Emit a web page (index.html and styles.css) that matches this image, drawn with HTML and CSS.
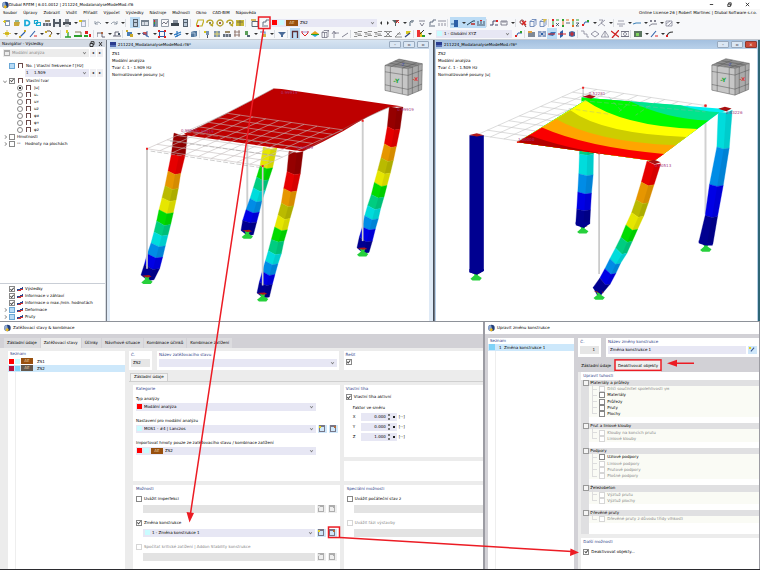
FILE: index.html
```html
<!DOCTYPE html>
<html lang="cs">
<head>
<meta charset="utf-8">
<title>Dlubal RFEM</title>
<link rel="stylesheet" href="styles.css">
</head>
<body>
<header class="app-head">
  <div class="title-bar">
    <svg class="logo" viewBox="0 0 8 8"><circle cx="4.5" cy="4" r="3.2" fill="#23407c"/><path d="M1 2l3-1 1 4-3 2z" fill="#8fa9cf"/><circle cx="4.2" cy="5.8" r="1.5" fill="#e8b820"/></svg>
    <span class="grow">Dlubal RFEM | 6.01.0012 | 211224_ModalanalyseModeMod.rf6</span>
    <button class="win" aria-label="Minimalizovat"><svg viewBox="0 0 6 6"><path d="M1 3h4" /></svg></button>
    <button class="win" aria-label="Obnovit"><svg viewBox="0 0 6 6"><path d="M1 2.5h3v3H1zM2 2.5V1h3v3H4"/></svg></button>
    <button class="win" aria-label="Zavřít"><svg viewBox="0 0 6 6"><path d="M1 1l4 4M5 1L1 5"/></svg></button>
  </div>
  <nav class="menu">
    <a href="#">Soubor</a><a href="#">Úpravy</a><a href="#">Zobrazit</a><a href="#">Vložit</a><a href="#">Přiřadit</a><a href="#">Výpočet</a><a href="#">Výsledky</a><a href="#">Nástroje</a><a href="#">Možnosti</a><a href="#">Okno</a><a href="#">CAD-BIM</a><a href="#">Nápověda</a>
    <span class="licence">Online License 26 | Robert Martinec | Dlubal Software s.r.o.</span>
  </nav>
  <div class="toolbar">
    <div class="tools wide" data-icons="newdoc folder dcyan copies blocks save print v docstar | undo v redo v | panel* table legend chart printer panel | para swirl gear swirl sheet | window loadcase"></div>
    <div class="combo case-combo"><i class="sw red"></i><i class="sw cyan"></i><i class="ae">AE</i><select aria-label="Zatěžovací stav"><option>ZS2</option></select><i class="chev"></i></div>
    <div class="tools" data-icons="prev next filter v hook dots loadcase bars | wave* v* load* beam* | arrowx ruler v | findx cube cubey | axx axy axz axr v sketch v | strike v line v xx v hatch v"></div>
  </div>
  <div class="toolbar">
    <div class="tools" data-icons="star v pen penx v hookr v | node greens redgreen | nodes v beams | shape v rednode v square v blue v cubeb | pin gridy blocks gridr greenx v pinb v | funnel | frame* redv rainbow box3 axis slash | layers layers layers layersx wedge wandy | spectrum v"></div>
    <div class="combo axis-combo"><i class="sw cyan"></i><select aria-label="Souřadný systém"><option>1 - Globální XYZ</option></select><i class="chev"></i></div>
    <div class="tools" data-icons="axr | boxo target plane* planer planed | steps diamond tri redx camera | greenbox v penx v curve"></div>
  </div>
</header>

<main class="workspace">
  <aside class="navigator">
    <h2>Navigátor - Výsledky <svg class="dock" viewBox="0 0 14 6"><path d="M1 2.5h3v3H1zM2 2V.7h3v3H4M10 1l3 4M13 1l-3 4"/></svg></h2>
    <div class="nav-pick"><div class="combo off"><i class="sheet"></i><select aria-label="Typ analýzy" disabled><option>Modální analýza</option></select><i class="chev"></i></div><button aria-label="Předchozí">◂</button><button aria-label="Další">▸</button></div>
    <div class="tree">
      <label class="r"><i class="tw"></i><input type="checkbox" class="part"><i class="fr"></i>No. | Vlastní frekvence f [Hz]</label>
      <div class="nav-pick freq"><div class="combo"><span>1</span><select aria-label="Vlastní frekvence"><option>1.509</option></select><i class="chev"></i></div><button aria-label="Předchozí tvar">◂</button><button aria-label="Další tvar">▸</button></div>
      <label class="r"><i class="tw open"></i><input type="checkbox" checked><i class="fr"></i>Vlastní tvar</label>
      <label class="r sub"><input type="radio" name="u" checked><i class="fr"></i>|u|</label>
      <label class="r sub"><input type="radio" name="u"><i class="fr"></i>uₓ</label>
      <label class="r sub"><input type="radio" name="u"><i class="fr"></i>uʏ</label>
      <label class="r sub"><input type="radio" name="u"><i class="fr"></i>uᴢ</label>
      <label class="r sub"><input type="radio" name="u"><i class="fr"></i>φx</label>
      <label class="r sub"><input type="radio" name="u"><i class="fr"></i>φʏ</label>
      <label class="r sub"><input type="radio" name="u"><i class="fr"></i>φᴢ</label>
      <label class="r"><i class="tw shut"></i><input type="checkbox">Hmotnosti</label>
      <label class="r"><i class="tw shut"></i><input type="checkbox"><i class="xx">ˣˣ</i>Hodnoty na plochách</label>
    </div>
    <div class="tree foot">
      <label class="r"><i class="tw"></i><input type="checkbox" checked><i class="bm"></i>Výsledky</label>
      <label class="r"><i class="tw"></i><input type="checkbox" checked><i class="bm"></i>Informace v záhlaví</label>
      <label class="r"><i class="tw"></i><input type="checkbox" checked><i class="bm"></i>Informace o max./min. hodnotách</label>
      <label class="r"><i class="tw shut"></i><input type="checkbox" class="part"><i class="bm"></i>Deformace</label>
      <label class="r"><i class="tw shut"></i><input type="checkbox" class="part"><i class="bm"></i>Pruty</label>
    </div>
  </aside>

  <section class="mdi">
    <div class="mdi-bar"><i class="flag"></i><span class="grow">211224_ModalanalyseModeMod.rf6*</span><button aria-label="Minimalizovat">–</button><button aria-label="Maximalizovat">▫</button><button aria-label="Zavřít">▫</button></div>
    <div class="view">
      <svg id="sceneA" viewBox="110 49 319 271" role="img" aria-label="Tvar kmitu ZS1"></svg>
      <p>ZS1<br>Modální analýza<br>Tvar č. 1 - 1.909 Hz<br>Normalizované posuny |u|</p>
    </div>
  </section>
  <section class="mdi active">
    <div class="mdi-bar"><i class="flag"></i><span class="grow">211224_ModalanalyseModeMod.rf6*</span><button aria-label="Minimalizovat">–</button><button aria-label="Maximalizovat">▫</button><button class="close" aria-label="Zavřít">×</button></div>
    <div class="view">
      <svg id="sceneB" viewBox="436 49 320 271" role="img" aria-label="Tvar kmitu ZS2"></svg>
      <p>ZS2<br>Modální analýza<br>Tvar č. 1 - 1.509 Hz<br>Normalizované posuny |u|</p>
    </div>
  </section>
</main>

<div class="dialogs">
  <section class="dlg cases">
    <h2><svg class="logo" viewBox="0 0 8 8"><circle cx="4.5" cy="4" r="3.2" fill="#23407c"/><path d="M1 2l3-1 1 4-3 2z" fill="#8fa9cf"/><circle cx="4.2" cy="5.8" r="1.5" fill="#e8b820"/></svg>Zatěžovací stavy &amp; kombinace</h2>
    <div class="tabs"><button>Základní údaje</button><button class="on">Zatěžovací stavy</button><button>Účinky</button><button>Návrhové situace</button><button>Kombinace účinků</button><button>Kombinace zatížení</button></div>
    <div class="cases-body">
      <div class="panel list">
        <h3>Seznam</h3>
        <div class="li"><i class="sw red"></i><i class="sw cyan"></i><i class="ae">AE</i><span>ZS1</span></div>
        <div class="li sel"><i class="sw wine"></i><i class="sw sky"></i><i class="ae dim">AE</i><span>ZS2</span></div>
        <div class="rest"></div>
      </div>
      <div class="detail">
        <div class="ident">
          <label class="panel no"><span class="cap">Č.</span><input class="field ro" value="ZS2" readonly></label>
          <div class="panel name"><label class="cap" for="nm">Název zatěžovacího stavu</label><div class="combo"><select id="nm"><option></option></select><i class="chev"></i></div></div>
          <div class="panel solve"><label class="cap" for="sv">Řešit</label><input id="sv" type="checkbox" checked></div>
        </div>
        <div class="inner-tabs"><button>Základní údaje</button></div>
        <div class="cols">
          <div class="panel cat">
            <h3>Kategorie</h3>
            <label for="f1">Typ analýzy</label>
            <div class="line"><div class="combo"><i class="sw red"></i><select id="f1"><option>Modální analýza</option></select><i class="chev"></i></div></div>
            <label for="f2">Nastavení pro modální analýzu</label>
            <div class="line"><div class="combo"><i class="sw cyan"></i><select id="f2"><option>MOS1 - #4 | Lanczos</option></select><i class="chev"></i></div><button class="act new" aria-label="Nový"></button><button class="act edit" aria-label="Upravit"></button></div>
            <label for="f3">Importovat hmoty pouze ze zatěžovacího stavu / kombinace zatížení</label>
            <div class="line"><div class="combo"><i class="sw red"></i><i class="sw cyan"></i><i class="ae">AE</i><select id="f3"><option>ZS2</option></select><i class="chev"></i></div></div>
          </div>
          <div class="right-top">
            <div class="panel weight">
              <h3>Vlastní tíha</h3>
              <label class="ck"><input type="checkbox" checked>Vlastní tíha aktivní</label>
              <p>Faktor ve směru</p>
              <label class="ax"><span>X</span><input value="0.000"><i class="spin"></i><em>[--]</em></label>
              <label class="ax"><span>Y</span><input value="0.000"><i class="spin"></i><em>[--]</em></label>
              <label class="ax"><span>Z</span><input value="1.000"><i class="spin"></i><em>[--]</em></label>
            </div>
            <div class="panel blank"></div>
          </div>
          <div class="panel opts">
            <h3>Možnosti</h3>
            <label class="ck"><input type="checkbox">Uvážit imperfekci</label>
            <div class="line in"><div class="combo gone"></div><button class="act new gray" aria-label="Nový" disabled></button><button class="act edit gray" aria-label="Upravit" disabled></button></div>
            <label class="ck"><input type="checkbox" checked>Změna konstrukce</label>
            <div class="line in"><div class="combo"><i class="sw cyan"></i><select aria-label="Změna konstrukce"><option>1 - Změna konstrukce 1</option></select><i class="chev"></i></div><button class="act new" aria-label="Nová změna"></button><button class="act edit" aria-label="Upravit změnu"></button></div>
            <label class="ck dis"><input type="checkbox" disabled>Spočítat kritické zatížení | Addon Stability konstrukce</label>
            <div class="line in"><div class="combo gone"></div><button class="act new gray" aria-label="Nový" disabled></button><button class="act edit gray" aria-label="Upravit" disabled></button></div>
          </div>
          <div class="panel opts special">
            <h3>Speciální možnosti</h3>
            <label class="ck"><input type="checkbox">Uvážit počáteční stav z</label>
            <div class="line in"><div class="combo gone"></div></div>
            <label class="ck dis"><input type="checkbox" disabled>Uvážit fázi výstavby</label>
            <div class="line in"><div class="combo gone"></div></div>
          </div>
        </div>
      </div>
    </div>
  </section>

  <section class="dlg mod">
    <h2><svg class="logo" viewBox="0 0 8 8"><circle cx="4.5" cy="4" r="3.2" fill="#23407c"/><path d="M1 2l3-1 1 4-3 2z" fill="#8fa9cf"/><circle cx="4.2" cy="5.8" r="1.5" fill="#e8b820"/></svg>Upravit změnu konstrukce</h2>
    <div class="mod-body">
      <div class="panel list">
        <h3>Seznam</h3>
        <div class="li sel"><i class="sw sky"></i><span>1&nbsp; Změna konstrukce 1</span></div>
        <div class="rest"></div>
      </div>
      <div class="detail">
        <div class="ident">
          <label class="panel no"><span class="cap">Č.</span><input class="field ro num" value="1" readonly></label>
          <div class="panel name"><label class="cap" for="mn">Název změny konstrukce</label><div class="line"><input id="mn" class="field" value="Změna konstrukce 1"><button class="act pen" aria-label="Upravit název"></button></div></div>
        </div>
        <div class="mod-tabs"><button>Základní údaje</button><button class="on">Deaktivovat objekty</button></div>
        <div class="stiff">
          <h3>Upravit tuhosti</h3>
          <div class="groups">
            <div class="g">Materiály a průřezy</div>
            <label class="n dis"><input type="checkbox" disabled>Dílčí součinitel spolehlivosti γᴍ</label>
            <label class="n"><input type="checkbox">Materiály</label>
            <label class="n"><input type="checkbox">Průřezy</label>
            <label class="n"><input type="checkbox">Pruty</label>
            <label class="n"><input type="checkbox">Plochy</label>
            <div class="gap"></div>
            <div class="g">Prut a liniové klouby</div>
            <label class="n dis"><input type="checkbox" disabled>Klouby na koncích prutu</label>
            <label class="n dis"><input type="checkbox" disabled>Liniové klouby</label>
            <div class="gap"></div>
            <div class="g">Podpory</div>
            <label class="n"><input type="checkbox">Uzlové podpory</label>
            <label class="n dis"><input type="checkbox" disabled>Liniové podpory</label>
            <label class="n dis"><input type="checkbox" disabled>Prutové podpory</label>
            <label class="n dis"><input type="checkbox" disabled>Plošné podpory</label>
            <div class="gap"></div>
            <div class="g">Železobeton</div>
            <label class="n dis"><input type="checkbox" disabled>Výztuž prutu</label>
            <label class="n dis"><input type="checkbox" disabled>Výztuž plochy</label>
            <div class="gap"></div>
            <div class="g">Dřevěné pruty</div>
            <label class="n dis"><input type="checkbox" disabled>Dřevěné pruty z důvodu třídy vlhkosti</label>
            <div class="gap"></div>
          </div>
          <div class="panel more"><h3>Další možnosti</h3><label class="ck"><input type="checkbox" checked>Deaktivovat objekty...</label></div>
        </div>
      </div>
    </div>
  </section>
</div>

<svg class="callouts" viewBox="0 0 760 570" preserveAspectRatio="none" aria-hidden="true">
  <g fill="none" stroke="#ec1c24" stroke-width="1.5"><rect x="258.5" y="17" width="11.5" height="11.5"/><path d="M263.5 29L190.500 513M340 537L572 551M694 363H676"/><rect x="328.500" y="526.500" width="11" height="10.500"/><rect x="615" y="359.500" width="46" height="10.500"/></g>
  <path d="M189.500 522l-3-10.500 7.500 1zM579 552l-9 3.500.5-7.500zM667 363l10-3.500v7z" fill="#ec1c24"/>
</svg>
<script src="app.js"></script>
</body>
</html>
```
FILE: styles.css
```css
* { box-sizing: border-box; }
html, body { margin: 0; }
body {
  display: grid;
  grid-template-rows: auto 281fr 249fr;
  min-height: 100vh;
  position: relative;
  overflow-x: hidden;
  background: #f5f6f8;
  color: #000;
  font-family: "DejaVu Sans", "Open Sans", sans-serif;
  font-size: 4px;
  line-height: 6px;
}
button, input, select { font: inherit; color: inherit; margin: 0; padding: 0; border: 0; background: none; border-radius: 0; }
button { white-space: nowrap; }
select { appearance: none; flex: 1; min-width: 0; opacity: 1; }
h2, h3, p { margin: 0; font-size: inherit; font-weight: 400; }
i, em { font-style: normal; }
a { color: inherit; text-decoration: none; }
.grow { flex: 1; }
.logo { width: 8px; height: 8px; flex: none; }

.title-bar { display: flex; align-items: center; height: 9px; padding: 0 4px 0 1px; background: #fff; }
.win { width: 18px; height: 8px; display: grid; place-items: center; }
.win svg { width: 5px; height: 5px; fill: none; stroke: #222; stroke-width: 1; }
.menu { display: flex; align-items: center; height: 8px; gap: 6px; padding: 0 3px; background: #f8f8f8; }
.licence { margin-left: auto; }
.toolbar { display: flex; align-items: center; height: 11px; padding: 0 2px; background: #f7f8fa; }
.tools { display: flex; align-items: center; }
.tools button { width: 10px; height: 11px; display: grid; place-items: center; flex: none; }
.tools button svg { width: 8px; height: 8px; }
.tools .dd { width: 6px; }
.tools .step { width: 7px; }
.tools .on { background: #bcdcf5; }
.tools hr { width: 3px; height: 8px; margin: 0; border: 0; border-left: 1px solid #dadde2; flex: none; }
.tools.wide hr { width: 5px; }

.combo { display: flex; align-items: center; gap: 2px; height: 8px; flex: 1; min-width: 0; padding: 0 1px; background: #e7e7f4; }
.combo.gone { background: #e3e3e3; }
.case-combo { flex: 0 0 106px; margin-left: 1px; }
.axis-combo { flex: 0 0 76px; margin: 0 2px 0 4px; }
.chev { width: 3px; height: 3px; margin: 0 2px 1px 0; border: solid #777; border-width: 0 1px 1px 0; transform: rotate(45deg) scale(0.8); flex: none; }
.sw { width: 5px; height: 5px; flex: none; }
.red { background: #f00; }
.cyan { background: #c9fcff; }
.wine { background: #b5123c; }
.sky { background: #7fd2f7; }
.ae { width: 12px; height: 6px; flex: none; background: #98500e; color: #e8c8a0; text-align: center; }
.ae.dim { background: #63584c; }

input[type=checkbox], input[type=radio] { appearance: none; width: 6px; height: 6px; border: 1px solid #888; background: #fff; flex: none; display: grid; place-items: center; }
input[type=radio] { border-radius: 3px; }
input[type=checkbox]:checked::after { content: ""; width: 4px; height: 4px; background: #444; clip-path: polygon(0 50%, 15% 35%, 38% 62%, 85% 5%, 100% 20%, 40% 95%); }
input[type=radio]:checked::after { content: ""; width: 2px; height: 2px; background: #222; }
input[type=checkbox]:disabled { border-color: #d6d6d6; }
input.part { background: #b7daf5; border-color: #6aa7d6; }
.dis { color: #888; }

.workspace { display: grid; grid-template-columns: 106fr 328fr 326fr; border-top: 1px solid #c6cbd2; background: #fff; }
.navigator { display: flex; flex-direction: column; background: #fff; border-right: 1px solid #d9dde2; }
.navigator h2 { display: flex; justify-content: space-between; align-items: center; height: 7px; padding: 0 2px; background: #d3dae4; }
.dock { width: 14px; height: 6px; fill: none; stroke: #333; stroke-width: 1; }
.nav-pick { display: flex; align-items: center; gap: 1px; padding: 2px 2px 2px 3px; }
.nav-pick button { width: 6px; height: 8px; background: #f0f0f3; }
.combo.off { background: #ececec; color: #888; }
.sheet { width: 6px; height: 6px; border: 1px solid #aaa; border-top-width: 2px; }
.nav-pick.freq { padding: 0 2px 0 25px; height: 8px; }
.freq span { width: 6px; }
.tree { padding-top: 3px; }
.r { display: flex; align-items: center; height: 7px; gap: 2px; padding-left: 2px; white-space: nowrap; }
.r.sub { padding-left: 17px; }
.tw { width: 5px; height: 7px; display: grid; place-items: center; }
.tw.open::after, .tw.shut::after { content: ""; width: 3px; height: 3px; border: solid #888; border-width: 0 1px 1px 0; transform: rotate(45deg) scale(0.7); }
.tw.shut::after { transform: rotate(-45deg) scale(0.7); }
.fr { width: 5px; height: 5px; margin: 0 1px; border: 1px solid #6b4a4a; border-bottom: 0; }
.xx { width: 6px; }
.bm { width: 6px; height: 4px; background: linear-gradient(160deg, transparent 40%, #27458f 40% 60%, #c33 60% 80%, transparent 80%); }
.foot { margin-top: auto; padding-top: 2px; border-top: 1px solid #c9ced6; }

.mdi { display: flex; flex-direction: column; padding: 0 4px 0 3px; background: #dfeaf6; border-left: 1px solid #747b86; border-right: 1px solid #444c58; min-width: 0; }
.mdi.active { background: #b9d1ea; border-right: 2px solid #2e6676; padding: 0 1px; }
.mdi-bar { display: flex; align-items: center; height: 9px; gap: 2px; background: linear-gradient(#d7e4f2, #c5d7ea); }
.active .mdi-bar { background: linear-gradient(#a4c0df, #b9d1ea); }
.flag { width: 6px; height: 5px; background: linear-gradient(#2a3c8f 60%, #5872b8 60%); }
.mdi-bar button { width: 12px; height: 7px; line-height: 5px; border: 1px solid #98a9bd; border-radius: 1px; background: #dbe7f4; }
.mdi-bar .close { background: #cb4a38; color: #fff; border-color: #8c3a30; }
.view { position: relative; flex: 1; background: #fff; min-height: 0; }
.view svg { display: block; width: 100%; height: 100%; }
.view p { position: absolute; left: 2px; top: 1px; line-height: 7px; }

.dialogs { display: grid; grid-template-columns: 485fr 275fr; border-top: 1px solid #8e9299; border-bottom: 2px solid #2b2b2f; }
.dlg { display: flex; flex-direction: column; min-width: 0; background: #d2d1d6; border-right: 1px solid #9c9ca3; }
.dlg h2 { display: flex; align-items: center; gap: 2px; height: 12px; padding: 0 3px; background: #fff; }
.cases { border-right-width: 2px; }
.mod h2 { padding-left: 2px; }
.panel { background: #fff; min-width: 0; }
h3, .cap { display: block; color: #2f4288; padding-left: 2px; line-height: 6px; }
.tabs { display: flex; padding: 4px 3px 0 4px; height: 14px; gap: 1px; }
.tabs button { padding: 0 3px; background: #dcdcdf; }
.tabs .on { background: #ececec; }
.cases-body { flex: 1; display: grid; grid-template-columns: 122fr 357fr; gap: 4px; padding: 3px 0 0 4px; background: #ececec; }
.list { display: flex; flex-direction: column; }
.cases .list { margin-left: 4px; }
.cases .list h3 { height: 7px; }
.li { display: flex; align-items: center; gap: 1px; height: 7px; padding-left: 1px; }
.li span { padding-left: 3px; flex: 1; line-height: 7px; }
.li.sel { background: #cde8fb; }
.rest { flex: 1; margin-left: 7px; border-left: 1px solid #eee; }
.detail { display: flex; flex-direction: column; min-width: 0; }
.ident { display: grid; grid-template-columns: 23fr 181fr 139fr; gap: 5px; }
.ident .panel { display: flex; flex-direction: column; height: 19px; padding: 1px 2px; }
.ident .cap { height: 7px; padding-left: 0; }
.ident .combo { flex: 0 0 8px; }
.field { width: 100%; height: 8px; padding: 0 2px; background: #e7e7f4; }
.ro { background: #e6e6e6; }
.num { text-align: right; padding-right: 4px; }
.inner-tabs { display: flex; height: 12px; padding: 3px 0 0 1px; border-bottom: 1px solid #cfcfcf; }
.inner-tabs button { padding: 0 3px; background: #f3f3f3; border: 1px solid #cfcfcf; border-bottom: 0; }
.cols { flex: 1; display: grid; grid-template-columns: 208fr 140fr; grid-template-rows: 96fr 84fr; gap: 4px; padding: 3px 0 0 4px; }
.cols > * { min-width: 0; }
.cat h3 { height: 10px; padding: 1px 0 0; }
.cat { padding: 0 3px; }
.cat label { display: block; height: 8px; line-height: 8px; }
.cat .line { margin-bottom: 6px; }
.cat .combo { flex: 0 0 180px; }
.line { display: flex; align-items: center; height: 8px; gap: 2px; }
.act { position: relative; width: 9px; height: 8px; background: #cfe7fa; flex: none; display: grid; place-items: center; }
.act::before { content: ""; width: 4px; height: 4px; border: 1px solid #778; border-top-width: 2px; }
.act::after { content: ""; position: absolute; left: 1px; top: 1px; width: 2px; height: 2px; background: #e4cf20; }
.act.edit::after { left: 5px; background: #b36a38; }
.act.pen::before { width: 5px; height: 1px; border: 0; background: #35558f; transform: rotate(-50deg); }
.act.gray { background: #e3e3e3; opacity: 0.6; filter: grayscale(1); }
.right-top { display: grid; grid-template-rows: 72fr 20fr; gap: 4px; }
.weight { padding: 1px 2px; }
.weight p { margin: 4px 0 0 7px; height: 7px; }
.weight h3, .opts h3 { padding-left: 0; height: 7px; }
.ck { display: flex; align-items: center; gap: 2px; height: 8px; }
.weight .ck { padding-top: 1px; }
.ax { display: flex; align-items: center; height: 10px; margin-left: 7px; }
.ax span { width: 8px; }
.ax input { width: 26px; height: 8px; padding-right: 1px; text-align: right; background: #e7e7f4; }
.spin { width: 10px; height: 8px; margin-right: 2px; background: radial-gradient(circle at 7px 4px, #222 1px, transparent 1px), radial-gradient(circle at 2px 2px, #777 1px, transparent 1px), radial-gradient(circle at 2px 6px, #777 1px, transparent 1px), #e7e7f4; }
.opts { padding: 1px 3px 1px 3px; }
.opts h3 { height: 9px; }
.opts .line { margin: 2px 0 6px 7px; }
.opts .line .combo { padding-left: 2px; flex: 0 0 172px; }
.special .line .combo { flex: 1; }
.special { padding-right: 0; }

.mod-body { flex: 1; display: grid; grid-template-columns: 87fr 182fr; gap: 4px; padding: 4px 0 0 3px; }
.mod .list .sel span { padding-left: 3px; }
.mod .sw { width: 6px; height: 6px; }
.mod .ident { grid-template-columns: 23fr 155fr; }
.mod .name .line { gap: 2px; }
.mod-tabs { display: flex; height: 15px; padding-top: 3px; gap: 1px; }
.mod-tabs button { padding: 0 3px; }
.mod-tabs .on { background: #f0f0f0; }
.stiff { flex: 1; display: flex; flex-direction: column; padding-left: 3px; background: #ececec; min-height: 0; }
.stiff h3 { background: #fff; }
.stiff > h3 { height: 8px; line-height: 8px; }
.groups { flex: 1; display: flex; flex-direction: column; padding-bottom: 5px; background: #fff; border-left: 8px solid #dfdfe1; min-height: 0; }
.groups > * { flex: 1; min-height: 0; display: flex; align-items: center; line-height: 6px; }
.g { position: relative; padding-left: 1px; background: #e0e0e2; }
.g::before { content: ""; position: absolute; left: -6px; width: 4px; height: 4px; border: 1px solid #999; background: #f4f4f4; }
.n { gap: 2px; padding-left: 3px; background: #fafbf5; }
.n::before { content: ""; width: 4px; height: 6px; border: solid #ddd; border-width: 0 0 1px 1px; transform: translateY(-3px); }
.more { flex: 0 0 31px; margin-top: 4px; padding-top: 1px; }
.more .ck { margin: 3px 0 0 2px; }

.callouts { position: absolute; inset: 0; width: 100%; height: 100%; pointer-events: none; }
```
FILE: app.js
```js
// Toolbar glyphs, drawn in an 8x8 box.
const s = (d, c, w = 1) => `<path d="${d}" fill="none" stroke="${c}" stroke-width="${w}"/>`;
const f = (d, c) => `<path d="${d}" fill="${c}"/>`;
const GREY = '#66707c', BLUE = '#2c5fa8', YEL = '#ddc81c', RED = '#d22', GRN = '#2ca02c';
const G = {
  newdoc: f('M2 1h5v6H2z', '#8397ae') + f('M3 3h3v3H3z', '#fff') + f('M0 2h3v1H0zM1 1h1v3H1z', YEL),
  folder: f('M1 3h6l-1 4H1z', '#c9a93a') + f('M2 1h4v2H2z', '#8fb7a0'),
  dcyan: s('M2 1.500h2a2 2 0 0 1 0 5H2z', '#16a9d8', 1.7),
  copies: s('M1.500 1.500h3v3h-3zM3.500 3.500h4v3h-4z', '#1ba8d0', 1.2),
  blocks: f('M0 4h8v3H0z', GREY) + f('M2 1h5v2H2z', '#9a8a6a') + s('M2.500 3v4M5.500 3v4', '#dde', 0.6),
  save: f('M0 0h8v8H0z', '#535c66') + f('M2 0h4v3H2zM2 5h4v3H2z', '#e9edf1'),
  print: f('M0 3h8v3H0z', '#4a5058') + f('M2 0h4v3H2z', '#8a9098') + f('M2 5h4v3H2z', '#c8ccd0'),
  docstar: f('M2 1h5v7H2z', '#a9b5c2') + f('M3 3h3v4H3z', '#eef') + f('M0 1h3v2H0z', YEL),
  undo: s('M1 2v3h3M1 5q3-4 6 0', '#7b8794', 0.8), redo: s('M7 2v3H4M7 5Q4 1 1 5', '#7b8794', 0.8),
  panel: f('M2 0h5v8H2z', '#55616e') + f('M3 1h3v2H3zM3 4h3v3H3z', '#bccad8'),
  table: f('M0 1h8v6H0z', '#75808c') + f('M1 3h6v3H1z', '#d8dde4') + s('M3.500 3v3', '#75808c', 0.6),
  legend: f('M2 0h5v8H2z', '#8592a0') + f('M3 1h1v2H3z', RED) + f('M3 3h1v2H3z', GRN) + f('M3 5h1v2H3z', BLUE),
  chart: s('M.5 .5h7v7h-7z', '#7c8794', 0.8) + s('M1 5l2-2 2 2 2-3', '#556', 0.8),
  printer: f('M0 4h8v3H0z', '#3d4650') + f('M2 1h5v3H2z', '#8a93a0'),
  para: s('M0 7L2 1h6L6 7z', '#c0ae22', 1.2) + f('M1 6h2v2H1z', RED),
  swirl: s('M1 4a3 2.500 0 1 1 4 2l2 1', '#b9a422', 1.4) + f('M3 3h2v2H3z', '#886'),
  gear: s('M4 1a3 3 0 1 0 .1 0z', '#b4a12f', 1.4) + f('M3 3h2v2H3z', '#965'),
  sheet: f('M0 1h8v6H0z', '#c3b436') + s('M1 3h6M4 1v6', '#6b6650', 0.8),
  window: s('M1 2.500h6v5H1z', '#5a6674') + f('M0 0h5v2H0z', '#d7b860'),
  loadcase: s('M1 7h6M2 6V3h3V1M5 1h3', '#526074', 0.9),
  prev: f('M5 2v4L3 4z', '#333'), next: f('M3 2v4l2-2z', '#333'),
  filter: f('M0 1h7L4 4v3H3V4z', '#566') + s('M4 1l3 3M7 1L4 4', RED),
  hook: s('M2 7V3q1-2 4-1M4 2v2', '#567'), dots: s('M1 2h6M2 4l2 3 2-3', '#667', 0.8),
  bars: s('M0 2h8M1 4v3M4 4v3M7 4v3', '#778', 0.8),
  wave: f('M3 1h4v7H3z', BLUE) + s('M0 5h4', '#369'), load: s('M0 6l6-4h2', '#245') + f('M4 4h4v2H4z', '#b55'),
  beam: s('M0 6h8M1 2v3M4 2v3M7 2v3', '#456') + f('M3 1h2v1H3z', RED),
  arrowx: s('M0 6h3V2h4M5 6h3', '#446') + f('M6 1h2v2H6z', RED), ruler: s('M1 2v4h6V2zM3 2v2M5 2v2', '#667', 0.8),
  findx: s('M3 1a2 2 0 1 0 .1 0M5 5l2 3', '#733') + s('M3 2l4 4M7 2L3 6', RED, 1.3),
  cube: s('M1 2.500l2-2h4v5l-2 2H1zM1 2.500h4v5M5 2.500l2-2', '#5b7ab0', 0.8),
  cubey: s('M1 2.500l2-2h4v5l-2 2H1zM1 2.500h4v5', '#5b7ab0', 0.8) + f('M4 0h4L5 4z', '#d9bd4b'),
  axx: f('M0 0h2v2H0zM0 6h2v2H0z', RED) + s('M1 2v4M4 1h3', GRN) + s('M4 4l3 3M7 4L4 7', '#345', 0.8),
  axy: f('M0 0h2v2H0zM0 6h2v2H0z', GRN) + s('M1 2v4M4 1h3', '#e07020') + s('M4 4h4', '#345', 0.8),
  axz: f('M0 0h2v2H0zM0 6h2v2H0z', '#e07020') + s('M1 2v4M4 1h3', GRN) + s('M4 4h3L4 7h3', '#345', 0.8),
  axr: s('M1 7l2-4h4', BLUE) + f('M0 5h2v2H0z', RED) + f('M5 1h2v2H5z', GRN),
  sketch: s('M0 7l7-6M1 1h4l-2 3 4 3', '#889', 0.8), strike: s('M0 5h8M1 2h6M2 7h4', '#889', 0.8),
  line: s('M0 5l3-1h5', '#3b80b8', 1.1), xx: s('M1 1l2 2M3 1L1 3M5 1l2 2M7 1L5 3M0 7l3-2h5', '#667', 0.8),
  hatch: s('M1 2h6v5H1zM1 5l4-3M3 7l4-4', '#889', 0.8),
  star: f('M2 2h4v3H2z', YEL) + s('M0 3.500h8M4 0v7', '#c9a92a', 0.7), pen: s('M1 7l5-5', BLUE, 1.1) + f('M5 0h2v2H5zM0 6h2v2H0z', '#c9a92a'),
  penx: s('M1 7l5-6', BLUE, 1.1) + s('M5 6h3', RED), hookr: s('M2 1h3l2 2-3 4', '#6a5130') + f('M4 5h2v2H4zM0 1h2v2H0z', '#c9a92a'),
  node: s('M4 2v5M1 7h6', GRN, 1.3) + f('M2 0h2v3H2z', YEL), greens: f('M0 5h8v2H0z', GRN) + s('M1 2h6v3', '#875'),
  redgreen: f('M1 1h3v3H1zM5 4h2v3H5z', RED) + f('M0 5h4v2H0z', GRN),
  nodes: s('M0 7V3h5v4h3', '#556', 0.9) + f('M4 2h2v2H4z', '#a64'), beams: s('M0 6h8M2 6V2h4', '#556', 0.9) + f('M5 3h2v2H5z', '#456'),
  shape: f('M1 2h5v4H1z', '#4b7db4') + f('M4 4h3v3H4zM0 0h2v2H0z', '#c9a92a'), rednode: f('M1 2h4v3H1z', '#c55') + s('M0 3l7 4M5 1v6', BLUE, 0.9),
  square: s('M1.500 1.500h5v5h-5z', BLUE) + f('M0 0h2v2H0zM6 0h2v2H6zM0 6h2v2H0zM6 6h2v2H6z', RED),
  blue: s('M0 5l7-3M1 7l6-3M3 1v6', '#2876c0', 1.2), cubeb: f('M1 2l3-1h3v5L5 7H1z', '#54799f') + s('M1 3h4v4', '#cde', 0.7),
  pin: f('M3 1h3v4H3z', '#7a93b3') + f('M4 5h1v3H4z', '#556') + f('M1 1h2v2H1z', YEL),
  gridy: f('M1 1h6v6H1z', '#7e94ae') + s('M1 4h6M4 1v6', '#e3d773', 1), gridr: s('M1 2h6M1 5h6M2 0v7M6 0v7', '#8a6f66', 0.9),
  greenx: f('M2 1h3v4H2z', '#5a9f5a') + f('M4 5h3v2H4z', '#567'), pinb: s('M1 2h5v4', '#5b8dc0', 1.1) + f('M4 4h3v3H4z', '#cdb74a'),
  funnel: f('M0 2h8L5 5v2H3V5z', '#4b6b98'), frame: s('M1.500 8V1.500h5V8', '#5d2f35', 1.3),
  redv: s('M1 1v2l3 3 3-3V1', RED, 1) + s('M1 2h6', '#86b', 0.7),
  rainbow: f('M0 4l4-3 4 3z', '#e8a31c') + f('M0 4h8v1H0z', GRN) + f('M1 5h6L4 7z', '#2aa6e0'),
  box3: s('M1 2.500h5v5H1zM1 2.500l2-2h5v5l-2 2M6 2.500l2-2M3.500 2.500v5', '#667', 0.7),
  axis: s('M3 8V2M1 4l2-3 2 3M3 3h5', '#778', 0.8), slash: s('M1 7l6-4', '#778', 0.9),
  layers: s('M0 2.500h3l1-1h4M0 6.500h3l1-1h4M1 4h6', '#777', 0.8), layersx: s('M1 1l6 6M7 1L1 7M0 1.500h8M0 6.500h8', '#777', 0.8),
  wedge: s('M1 7l5-5M1 7h7M3 4h4', '#777', 0.8), wandy: f('M2 1h5L5 4H2z', '#d9c822') + s('M1 7l5-4', '#347', 1.2),
  spectrum: f('M0 0h3v7H0z', '#e33') + f('M3 2h2v5H3z', '#e8c01c') + f('M5 5h3v2H5z', GRN) + s('M3 4l4-4', '#333'),
  boxo: f('M0 2h7v5H0z', '#7f8a98') + f('M0 1h4v2H0z', '#e0a040'), target: f('M0 1h8v6H0z', '#8ba0c4') + s('M4 1v6M1 4h6', '#fff', 0.8) + f('M3 3h2v2H3z', BLUE),
  plane: f('M0 5l3-3h5L5 6z', '#3274b8') + s('M0 4h7', RED), planer: f('M2 2l3-2v6L2 8z', BLUE) + s('M0 4h8', RED),
  planed: f('M1 2l3-1 3 1v4L4 7 1 6z', '#4a69a0') + s('M2 4h4M4 2v4', RED, 1.2),
  steps: s('M0 1h3v3h3v3h2', '#889', 0.8), diamond: s('M0 4l4-3 4 3-4 3z', '#889', 0.9), tri: s('M0 7l4-6 4 6zM4 1v6', '#889', 0.8),
  redx: s('M0 1l8 6M8 0L1 8', '#cf2020', 1.3), camera: s('M0 1.500h8v5H0z', '#667', 0.9) + s('M4 2.500a1.500 1.500 0 1 0 .1 0', '#667', 0.8),
  greenbox: f('M0 1h8v6H0z', '#5b7560') + f('M2 3h3v3H2z', '#7fd35e'), curve: s('M1 7q0-5 6-5', '#333', 1.2) + f('M0 5h2v2H0z', RED),
};
for (const bar of document.querySelectorAll('[data-icons]')) {
  bar.innerHTML = bar.dataset.icons.split(' ').map(t => {
    if (t === '|') return '<hr>';
    const on = t.endsWith('*'), n = t.replace('*', ''), c = n === 'v' ? 'dd' : n === 'prev' || n === 'next' ? 'step' : '';
    const art = n === 'v' ? f('M2 3h4L4 5z', '#333') : G[n];
    return `<button class="${c}${on ? ' on' : ''}" aria-label="${n}"><svg viewBox="0 0 8 8">${art}</svg></button>`;
  }).join('');
}

// Result colours from the largest displacement to the smallest.
const RAMP = ['#960000', '#e60000', '#e69600', '#baba00', '#e6e600', '#00dc00', '#00cd80', '#00dcdc', '#008ce6', '#0000e6', '#000090'];
// A column is a list of left and right edge points, one colour band between neighbours.
function column(first, L, R) {
  const mid = i => [L[i][0] + (R[i][0] - L[i][0]) * 0.55, Math.max(L[i][1], R[i][1]) + 3];
  return L.slice(1).map((_, k) => {
    const c = RAMP[first + k], a = mid(k), b = mid(k + 1);
    return `<polygon points="${[L[k], a, R[k], R[k + 1], b, L[k + 1]].join(' ')}" fill="${c}" stroke="${c}" stroke-width="1"/>` +
      `<polygon points="${[a, R[k], R[k + 1], b].join(' ')}" fill="#000" opacity=".07"/>`;
  }).join('');
}
function mesh(a, b, c, d, nu, nv, vmax, col) {
  const at = (u, v) => [0, 1].map(i => (a[i] * (1 - u) + b[i] * u) * (1 - v) + (d[i] * (1 - u) + c[i] * u) * v);
  let p = '';
  for (let i = 0; i <= nu; i++) p += `M${at(i / nu, 0)}L${at(i / nu, vmax)}`;
  for (let j = 0; j <= nv; j++) if (j / nv <= vmax) p += `M${at(0, j / nv)}L${at(1, j / nv)}`;
  return s(p, col, 1.8);
}
const support = (x, y) => `<path d="M${x - 8} ${y - 12}h16l-3 8 12 8-6 7h-22l-6-5 12-10z" fill="#27d03c"/><path d="M${x - 16} ${y - 14}l16 5 14-2-8-5z" fill="#b01818"/>`;
const post = (x, y1, y2) => s(`M${x} ${y1}V${y2}`, '#bdbdbd', 5) + s(`M${x} ${y1}V${y2}`, '#e4e4e4', 1.5) + f(`M${x - 3} ${y1 - 3}h6v6h-6z`, '#e22');
const label = (x, y, t) => `<text x="${x}" y="${y}" font-size="12" fill="#a5367e">${t}</text>`;
const cube = `<path d="M828 75l42-19 70 14-43 15z" fill="#8d8d8d"/><path d="M828 75l69 10v80l-69-15z" fill="#c6c6c6"/><path d="M897 85l43-15-2 78-41 17z" fill="#aaa"/>` +
  s('M828 75l69 10 43-15-70-14zM828 75v75l69 15 41-17 2-78M897 85v80M844 77v76M880 83v78M828 94l69 11 43-16M828 133l69 14 42-16M910 81v79M928 75v77M842 68l70 13M857 62l69 13M846 79l43-19M881 83l42-16', '#555', 1.5) +
  '<text x="853" y="127" font-size="18" font-weight="700" fill="#22a83a">-Y</text><text x="911" y="123" font-size="15" font-weight="700" fill="#d33">-X</text><text x="874" y="77" font-size="12" fill="#4450a8">-Z</text>';

document.getElementById('sceneA').innerHTML = `<g transform="translate(110 80) scale(.33333)">` +
  post(412, 97, 430) +
  column(4, [[460,200],[450,257],[440,290],[430,322],[420,354],[408,388],[398,420],[393,450]], [[501,203],[488,262],[476,298],[466,330],[456,362],[448,395],[440,425],[430,463]]) +
  column(0, [[192,158],[184,222],[174,272],[165,316],[156,352],[147,388],[140,422],[132,455],[123,488],[112,520],[103,552],[93,584]], [[232,162],[226,222],[212,279],[205,324],[198,360],[190,397],[182,432],[174,464],[166,496],[158,530],[149,564],[132,598]]) +
  column(0, [[838,78],[832,138],[823,190],[813,232],[803,270],[793,306],[784,342],[773,375],[764,406],[757,440],[748,470],[741,502]], [[879,80],[870,146],[859,198],[850,240],[841,278],[831,315],[822,350],[812,384],[805,415],[796,446],[787,482],[777,516]]) +
  column(0, [[537,212],[531,273],[521,324],[514,368],[504,404],[494,440],[484,477],[475,511],[466,542],[457,573],[448,605],[441,638]], [[579,214],[571,280],[560,332],[551,376],[540,414],[532,448],[522,482],[514,520],[504,550],[495,582],[487,612],[478,650]]) +
  f('M222 160Q350 102 492 24L515 26 878 78 838 80Q780 102 700 152Q640 185 578 213L232 165z', '#be0000') +
  mesh([111,205],[458,257],[758,121],[412,72], 9, 10, 0.8, '#c4bcbc') +
  s('M232 158Q350 100 492 24M838 80Q730 125 578 213', '#8c7070', 1.5) +
  '<path d="M122 212L455 262M180 182L515 228M230 155L580 203" fill="none" stroke="#999" stroke-width="1.5" stroke-dasharray="14 6"/>' +
  post(111, 205, 565) + post(458, 257, 615) + post(758, 121, 482) +
  support(111,600) + support(412,464) + support(458,652) + support(758,517) +
  label(213,155,'0.99919') + label(262,159,'0.99919') + label(513,42,'0.99919') + label(862,92,'0.99919') + label(560,207,'0.99919') +
  `</g><g transform="translate(109 40) scale(.33333)">${cube}</g>`;

// The slab bands are painted from the far edge forward, each one over the last.
const FRONT = 'L655 362 247 306 450 180z';
document.getElementById('sceneB').innerHTML = `<g transform="translate(435 40) scale(.33333)">` +
  mesh([125,284],[490,338],[809,196],[443,142], 9, 10, 1, '#c4c4c4') +
  s('M443 142V180', '#999', 2) + post(491, 338, 700) + post(809, 196, 520) +
  column(6, [[432,328],[432,342],[430,400],[427,455],[424,506],[421,550]], [[476,328],[474,342],[473,403],[468,458],[465,508],[463,550]]) +
  column(7, [[847,215],[843,320],[821,432],[808,525],[789,605]], [[889,210],[880,323],[862,435],[845,528],[831,610]]) +
  f('M103 285h43v405l-21 12-22-7z', '#000090') + f('M103 284l22-5 21 6-21 4z', '#b01818') +
  column(1, [[634,362],[617,425],[601,478],[588,516],[571,553],[556,590],[540,622],[523,654],[508,684],[493,712],[473,740]], [[675,370],[655,433],[638,487],[624,527],[606,566],[590,602],[574,638],[555,668],[541,698],[524,730],[497,762]]) +
  f('M438 172L885 208 848 219' + FRONT, '#00f0f0') +
  f('M438 172L735 195Q790 213 851 216' + FRONT, '#00e58c') +
  f('M438 185V172L585 184Q690 236 818 241' + FRONT, '#00fa00') +
  f('M450 180Q560 258 785 266L655 362 247 306z', '#ffff00') +
  f('M405 210Q500 280 752 290L655 362 247 306z', '#cdcd00') +
  f('M362 236Q480 304 720 315L655 362 247 306z', '#ffa500') +
  f('M320 262Q450 320 685 341L655 362 247 306z', '#fa0000') +
  f('M247 306L283 285Q380 322 540 346z', '#b40000') +
  '<path d="M443 182L809 215M400 205L520 222M520 170L560 215M590 180L550 215M660 185L600 225" fill="none" stroke="#9aa" stroke-width="1.2" stroke-dasharray="14 7"/>' +
  f('M441 170l20-6 20 5-14 7zM847 206l20-6 20 5-16 8zM637 363l18-5 20 8-18 6z', '#a81010') +
  f('M488 336h6v6h-6zM806 194h6v6h-6zM440 140h6v6h-6zM245 303h5v5h-5z', '#e22') +
  support(123,708) + support(442,568) + support(491,766) + support(810,622) +
  f('M103 685h43v6l-21 11-22-7zM421 545h42v5l-18 12-24-8zM789 600l42 8-1 7-22 0-19-7zM473 738l28 14-4 10-24-20z', '#000090') +
  label(460,164,'0.52281') + label(248,301,'1.00000') + label(657,381,'0.90513') + label(870,222,'0.43226') + cube + `</g>`;
```
